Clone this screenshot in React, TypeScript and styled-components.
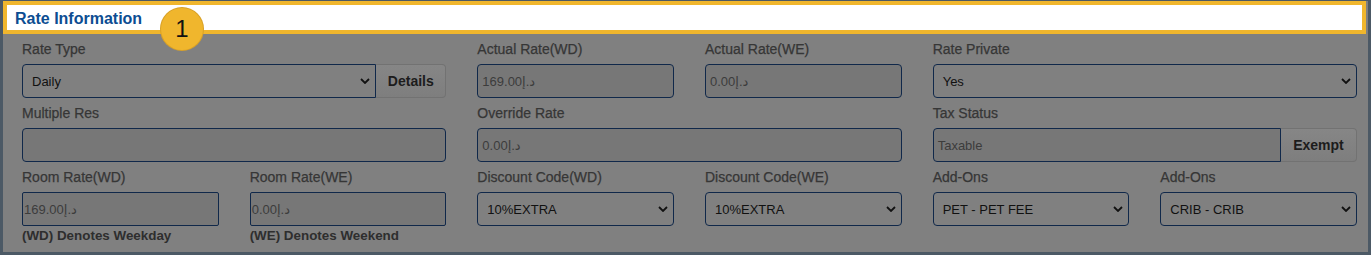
import styled, { createGlobalStyle } from "styled-components";

const GlobalStyle = createGlobalStyle`
  html, body {
    margin: 0;
    padding: 0;
    background: #4c5965;
  }
  body {
    font-family: "Liberation Sans", Arial, "DejaVu Sans", sans-serif;
  }
`;

const Frame = styled.div`
  width: 1371px;
  box-sizing: border-box;
  padding: 1px 3px 3px 3px;
`;

const Panel = styled.section`
  background: #808080;
  height: 251px;
  box-sizing: border-box;
`;

const Header = styled.div`
  position: relative;
  height: 33px;
  margin-right: 2px;
  box-sizing: border-box;
  border: 4px solid #f0b62d;
  background: #ffffff;
  display: flex;
  align-items: center;
  padding: 2px 0 0 8px;
`;

const Title = styled.h2`
  margin: 0;
  font-size: 16px;
  font-weight: 700;
  color: #0c4d92;
`;

const StepBadge = styled.div`
  position: absolute;
  left: 154px;
  top: 3px;
  width: 42px;
  height: 42px;
  border-radius: 50%;
  background: #f0b62d;
  box-shadow: 0 0 0 1px #d9a126;
  color: #111;
  font-size: 24px;
  display: flex;
  align-items: center;
  justify-content: center;
  z-index: 2;
`;

const Grid = styled.div`
  display: grid;
  grid-template-columns: repeat(6, minmax(0, 1fr));
  column-gap: 31px;
  row-gap: 5px;
  padding: 5px 11px 0 19px;
`;

const Field = styled.div<{ $span?: number }>`
  grid-column: span ${({ $span }) => $span ?? 1};
  display: flex;
  flex-direction: column;
  min-width: 0;
`;

const Label = styled.label`
  font-size: 14px;
  line-height: 20px;
  color: #363636;
  -webkit-text-stroke: 0.25px #363636;
  margin-bottom: 5px;
`;

const Note = styled.div`
  font-size: 13.4px;
  font-weight: 700;
  line-height: 20px;
  color: #2e2e2e;
`;

const Group = styled.div`
  display: flex;
  height: 34px;
`;

const SelectWrap = styled.div<{ $joined?: boolean }>`
  position: relative;
  flex: 1;
  height: 34px;
  box-sizing: border-box;
  border: 1px solid #10284a;
  border-radius: ${({ $joined }) => ($joined ? "4px 0 0 4px" : "4px")};
  background: #808080;
  display: flex;
  align-items: center;
  padding-left: 9px;
  font-size: 13px;
  color: #111;
`;

const Chevron = styled.svg`
  position: absolute;
  right: 5px;
  top: 50%;
  margin-top: -3px;
`;

const Input = styled.div<{ $joined?: boolean; $tight?: boolean }>`
  flex: 1;
  height: 34px;
  box-sizing: border-box;
  border: 1px solid #10284a;
  border-radius: ${({ $joined, $tight }) =>
    $joined ? "4px 0 0 4px" : $tight ? "2px" : "4px"};
  background: #777777;
  display: flex;
  align-items: center;
  padding-left: ${({ $tight }) => ($tight ? "1px" : "4px")};
  font-size: 13px;
  color: #3c3c3c;
`;

const AddonButton = styled.div<{ $width: number }>`
  width: ${({ $width }) => $width}px;
  height: 34px;
  box-sizing: border-box;
  border: 1px solid #727272;
  border-left: none;
  border-radius: 0 4px 4px 0;
  background: linear-gradient(#868686, #7e7e7e);
  display: flex;
  align-items: center;
  justify-content: center;
  font-size: 14px;
  font-weight: 700;
  color: #1c1c1c;
`;

const Select = ({ value, joined }: { value: string; joined?: boolean }) => (
  <SelectWrap $joined={joined}>
    {value}
    <Chevron width="10" height="6" viewBox="0 0 10 6">
      <path d="M1 1 L5 5 L9 1" fill="none" stroke="#111" strokeWidth="1.8" />
    </Chevron>
  </SelectWrap>
);

const App = () => {
  return (
    <>
      <GlobalStyle />
      <Frame>
        <Panel>
          <Header>
            <Title>Rate Information</Title>
            <StepBadge>1</StepBadge>
          </Header>
          <Grid>
            <Field $span={2}>
              <Label>Rate Type</Label>
              <Group>
                <Select value="Daily" joined />
                <AddonButton $width={70}>Details</AddonButton>
              </Group>
            </Field>
            <Field>
              <Label>Actual Rate(WD)</Label>
              <Group>
                <Input>169.00د.إ</Input>
              </Group>
            </Field>
            <Field>
              <Label>Actual Rate(WE)</Label>
              <Group>
                <Input>0.00د.إ</Input>
              </Group>
            </Field>
            <Field $span={2}>
              <Label>Rate Private</Label>
              <Group>
                <Select value="Yes" />
              </Group>
            </Field>

            <Field $span={2}>
              <Label>Multiple Res</Label>
              <Group>
                <Input />
              </Group>
            </Field>
            <Field $span={2}>
              <Label>Override Rate</Label>
              <Group>
                <Input>0.00د.إ</Input>
              </Group>
            </Field>
            <Field $span={2}>
              <Label>Tax Status</Label>
              <Group>
                <Input $joined>Taxable</Input>
                <AddonButton $width={76}>Exempt</AddonButton>
              </Group>
            </Field>

            <Field>
              <Label>Room Rate(WD)</Label>
              <Group>
                <Input $tight>169.00د.إ</Input>
              </Group>
              <Note>(WD) Denotes Weekday</Note>
            </Field>
            <Field>
              <Label>Room Rate(WE)</Label>
              <Group>
                <Input $tight>0.00د.إ</Input>
              </Group>
              <Note>(WE) Denotes Weekend</Note>
            </Field>
            <Field>
              <Label>Discount Code(WD)</Label>
              <Group>
                <Select value="10%EXTRA" />
              </Group>
            </Field>
            <Field>
              <Label>Discount Code(WE)</Label>
              <Group>
                <Select value="10%EXTRA" />
              </Group>
            </Field>
            <Field>
              <Label>Add-Ons</Label>
              <Group>
                <Select value="PET - PET FEE" />
              </Group>
            </Field>
            <Field>
              <Label>Add-Ons</Label>
              <Group>
                <Select value="CRIB - CRIB" />
              </Group>
            </Field>
          </Grid>
        </Panel>
      </Frame>
    </>
  );
};

export default App;
